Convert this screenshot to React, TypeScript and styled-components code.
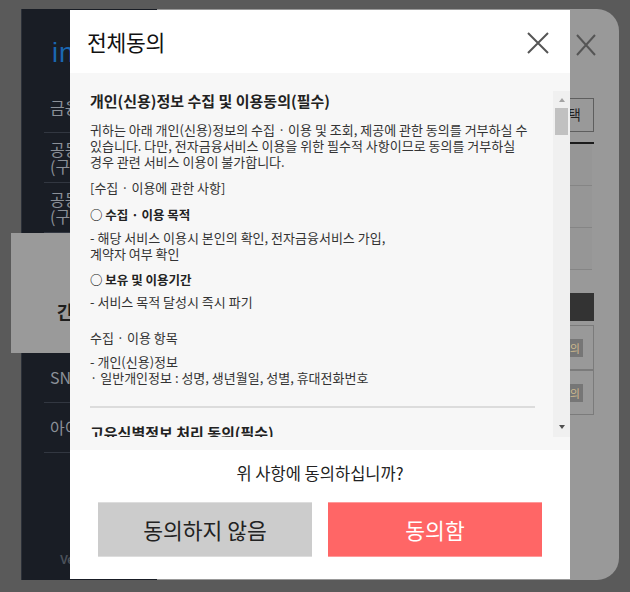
import React from "react";
import styled, { createGlobalStyle } from "styled-components";

const Global = createGlobalStyle`
  html, body { margin: 0; padding: 0; background: #5a5a5a; }
  body { font-family: "Noto Sans CJK KR", "Noto Sans", sans-serif; }
  * { box-sizing: border-box; }
`;

const Page = styled.div`
  position: relative;
  width: 630px;
  height: 592px;
  overflow: hidden;
  background: #5a5a5a;
  display: flex;
  padding: 9px 11px 12px 21px;
`;

/* ---------- page behind the dimmed overlay ---------- */
const Sidebar = styled.aside`
  width: 136px;
  flex: none;
  background: #191d25;
  border-left: 1px solid #2b3039;
  display: flex;
  flex-direction: column;
  position: relative;
  z-index: 1;
`;

const Logo = styled.div`
  margin: 27px 0 0 30px;
  height: 34px;
  font-family: "Liberation Sans", sans-serif;
  font-size: 27px;
  line-height: 34px;
  color: #1a67b2;
  letter-spacing: 1px;
`;

const Menu = styled.ul`
  list-style: none;
  margin: 13px 0 0;
  padding: 0 0 0 22px;
`;

const MenuItem = styled.li<{ $h: number }>`
  height: ${(p) => p.$h}px;
  border-bottom: 1px solid #323741;
  padding-left: 6px;
  display: flex;
  flex-direction: column;
  justify-content: center;
  font-size: 16px;
  line-height: 17px;
  color: #8b9098;
  white-space: nowrap;
`;

const ActiveItem = styled.li`
  height: 120px;
  width: 320px;
  margin-left: -33px;
  background: #9a9a9a;
  padding: 66px 0 0 46px;
  font-size: 18px;
  font-weight: 700;
  line-height: 24px;
  color: #1e1e1e;
  white-space: nowrap;
`;

const Version = styled.div`
  margin-top: auto;
  padding: 0 0 13px 38px;
  font-family: "Liberation Sans", sans-serif;
  font-size: 12px;
  font-weight: 700;
  color: #4a5059;
`;

const Panel = styled.section`
  flex: 1;
  background: #999999;
  border-radius: 0 22px 22px 0;
  display: flex;
  flex-direction: column;
  align-items: flex-end;
  padding: 25px 25px 0 0;
`;

const PanelClose = styled.div`
  margin-right: -2px;
  width: 20px;
  height: 22px;
  line-height: 0;
`;

const PanelBody = styled.div`
  width: 380px;
  display: flex;
  flex-direction: column;
`;

const ChoiceRow = styled.div`
  margin-top: 42px;
  display: flex;
  justify-content: flex-end;
`;

const ChoiceButton = styled.div`
  height: 34px;
  padding: 0 12px;
  border: 1.5px solid #5e5e5e;
  font-size: 14px;
  line-height: 31px;
  color: #222;
`;

const Table = styled.div`
  margin-top: 10px;
  border-top: 2px solid #1b1b1b;
`;

const TableRow = styled.div`
  height: 42px;
  margin-right: 2px;
  background: #969696;
  border-bottom: 1px solid #858585;
`;

const DarkBar = styled.div`
  margin-top: 23px;
  height: 28px;
  background: #333333;
`;

const Card = styled.div<{ $first?: boolean }>`
  margin-top: ${(p) => (p.$first ? 4 : 0)}px;
  height: 45px;
  border: 1px solid #7b7b7b;
  display: flex;
  align-items: center;
  justify-content: flex-end;
  padding-right: 10px;
`;

const Badge = styled.span`
  height: 18px;
  padding: 0 3px;
  background: #767676;
  font-size: 11px;
  line-height: 18px;
  color: #cdb98d;
`;

/* ---------- modal ---------- */
const Overlay = styled.div`
  position: absolute;
  inset: 0;
  z-index: 5;
  padding: 10px 0 0 70px;
`;

const Modal = styled.div`
  width: 500px;
  height: 569px;
  background: #ffffff;
  display: flex;
  flex-direction: column;
`;

const ModalHeader = styled.header`
  height: 63px;
  flex: none;
  display: flex;
  align-items: center;
  justify-content: space-between;
  padding: 0 21px 0 17px;
`;

const Title = styled.h2`
  margin: 0;
  font-size: 21.5px;
  font-weight: 400;
  color: #111;
  letter-spacing: -0.3px;
`;

const CloseButton = styled.button`
  width: 22px;
  height: 22px;
  margin-top: 3px;
  padding: 0;
  border: none;
  background: none;
  line-height: 0;
`;

const Content = styled.div`
  height: 377px;
  flex: none;
  background: #f7f7f7;
  padding: 18px 0 13px 20px;
  display: flex;
`;

const TextColumn = styled.div`
  flex: 1;
  overflow: hidden;
  padding-right: 18px;
  color: #333;
`;

const SectionTitle = styled.h3<{ $mb?: number }>`
  margin: 0 0 ${(p) => p.$mb ?? 0}px;
  font-size: 15px;
  font-weight: 700;
  line-height: 20px;
  color: #222;
  white-space: nowrap;
`;

const ItemTitle = styled.h4<{ $mb: number }>`
  margin: 0 0 ${(p) => p.$mb}px;
  font-size: 12.5px;
  font-weight: 700;
  line-height: 16px;
  color: #222;
`;

const Para = styled.p<{ $mb: number }>`
  margin: 0 0 ${(p) => p.$mb}px;
  font-size: 13px;
  line-height: 16px;
  color: #333;
`;

const Line = styled.span`
  display: block;
  white-space: nowrap;
`;

const Divider = styled.hr`
  margin: 0 0 15px;
  border: none;
  height: 2px;
  background: #dcdcdc;
`;

const Scrollbar = styled.div`
  width: 17px;
  flex: none;
  background: #f0f0f0;
  display: flex;
  flex-direction: column;
`;

const ArrowButton = styled.div<{ $down?: boolean }>`
  height: 17px;
  display: flex;
  align-items: center;
  justify-content: center;
  &::before {
    content: "";
    width: 0;
    height: 0;
    border-left: 3.5px solid transparent;
    border-right: 3.5px solid transparent;
    ${(p) =>
      p.$down
        ? "border-top: 4px solid #505050; margin-top: -4px;"
        : "border-bottom: 4px solid #a3a3a3;"}
  }
`;

const Thumb = styled.div`
  height: 27px;
  margin: 0 2px;
  background: #c1c1c1;
`;

const Track = styled.div`
  flex: 1;
`;

const Footer = styled.footer`
  flex: 1;
  padding: 12px 28px 0;
`;

const Question = styled.p`
  margin: 0;
  text-align: center;
  font-size: 16.5px;
  line-height: 22px;
  color: #222;
`;

const ButtonRow = styled.div`
  margin-top: 18px;
  display: grid;
  grid-template-columns: 1fr 1fr;
  gap: 16px;
`;

const ActionButton = styled.button<{ $primary?: boolean }>`
  height: 55px;
  border: none;
  border-top: 1px solid ${(p) => (p.$primary ? "#ff9a9a" : "#dddddd")};
  border-bottom: 1px solid ${(p) => (p.$primary ? "#ff9a9a" : "#dddddd")};
  background: ${(p) => (p.$primary ? "#ff6666" : "#cccccc")};
  color: ${(p) => (p.$primary ? "#ffffff" : "#222222")};
  font-family: "Noto Sans CJK KR", sans-serif;
  font-size: 21.5px;
  padding: 0;
`;

const XIcon = ({ color, w, h }: { color: string; w: number; h: number }) => (
  <svg width={w} height={h} viewBox={`0 0 ${w} ${h}`}>
    <path d={`M1 1 L${w - 1} ${h - 1} M${w - 1} 1 L1 ${h - 1}`} stroke={color} strokeWidth="2" fill="none" />
  </svg>
);

export default function App() {
  return (
    <>
      <Global />
      <Page>
        <Sidebar>
          <Logo>in</Logo>
          <Menu>
            <MenuItem $h={50}>금융인증서</MenuItem>
            <MenuItem $h={50}>
              <span>공동인증서</span>
              <span>(구 공인인증서)</span>
            </MenuItem>
            <MenuItem $h={50}>
              <span>공동인증서</span>
              <span>(구 범용인증서)</span>
            </MenuItem>
            <ActiveItem>간편인증</ActiveItem>
            <MenuItem $h={50}>SNS 로그인</MenuItem>
            <MenuItem $h={50}>아이디 로그인</MenuItem>
          </Menu>
          <Version>Ver 1.0.0</Version>
        </Sidebar>
        <Panel>
          <PanelClose>
            <XIcon color="#555" w={20} h={22} />
          </PanelClose>
          <PanelBody>
            <ChoiceRow>
              <ChoiceButton>인증서 선택</ChoiceButton>
            </ChoiceRow>
            <Table>
              <TableRow />
              <TableRow />
              <TableRow />
            </Table>
            <DarkBar />
            <Card $first>
              <Badge>동의</Badge>
            </Card>
            <Card>
              <Badge>동의</Badge>
            </Card>
          </PanelBody>
        </Panel>

        <Overlay>
          <Modal>
            <ModalHeader>
              <Title>전체동의</Title>
              <CloseButton aria-label="닫기">
                <XIcon color="#555" w={22} h={22} />
              </CloseButton>
            </ModalHeader>
            <Content>
              <TextColumn>
                <SectionTitle $mb={11}>개인(신용)정보 수집 및 이용동의(필수)</SectionTitle>
                <Para $mb={10}>
                  <Line>귀하는 아래 개인(신용)정보의 수집 · 이용 및 조회, 제공에 관한 동의를 거부하실 수</Line>
                  <Line>있습니다. 다만, 전자금융서비스 이용을 위한 필수적 사항이므로 동의를 거부하실</Line>
                  <Line>경우 관련 서비스 이용이 불가합니다.</Line>
                </Para>
                <Para $mb={11}>[수집 · 이용에 관한 사항]</Para>
                <ItemTitle $mb={7}>○ 수집 · 이용 목적</ItemTitle>
                <Para $mb={10}>
                  <Line>- 해당 서비스 이용시 본인의 확인, 전자금융서비스 가입,</Line>
                  <Line>계약자 여부 확인</Line>
                </Para>
                <ItemTitle $mb={6}>○ 보유 및 이용기간</ItemTitle>
                <Para $mb={20}>- 서비스 목적 달성시 즉시 파기</Para>
                <Para $mb={8}>수집 · 이용 항목</Para>
                <Para $mb={20}>
                  <Line>- 개인(신용)정보</Line>
                  <Line>· 일반개인정보 : 성명, 생년월일, 성별, 휴대전화번호</Line>
                </Para>
                <Divider />
                <SectionTitle $mb={11}>고유식별정보 처리 동의(필수)</SectionTitle>
                <Para $mb={10}>
                  <Line>귀하는 아래 고유식별정보의 처리에 관한 동의를 거부하실 수 있습니다.</Line>
                </Para>
              </TextColumn>
              <Scrollbar>
                <ArrowButton />
                <Thumb />
                <Track />
                <ArrowButton $down />
              </Scrollbar>
            </Content>
            <Footer>
              <Question>위 사항에 동의하십니까?</Question>
              <ButtonRow>
                <ActionButton>동의하지 않음</ActionButton>
                <ActionButton $primary>동의함</ActionButton>
              </ButtonRow>
            </Footer>
          </Modal>
        </Overlay>
      </Page>
    </>
  );
}
